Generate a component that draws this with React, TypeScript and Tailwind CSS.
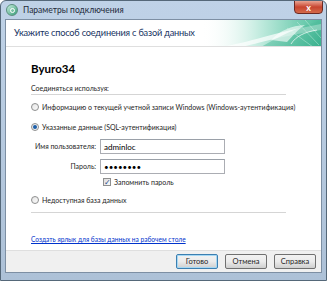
import { useState } from "react";

function Radio({ checked }: { checked?: boolean }) {
    return (
        <span className="w-[8px] h-[8px] rounded-full border border-[#8e8f8f] bg-gradient-to-br from-[#e6e6e6] to-[#fafafa] flex items-center justify-center shrink-0">
            {checked ? <span className="w-[4px] h-[4px] rounded-full bg-[#1c5ea8]"></span> : null}
        </span>
    );
}

function Field({ label, value }: { label: string; value: string }) {
    return (
        <div className="flex items-center h-[15px]">
            <span className="w-[69px] text-right pr-[4px] text-[7px] text-[#1e1e1e]">{label}</span>
            <div className="w-[125px] h-[15px] border border-[#abadb3] border-t-[#9aa0a8] bg-white flex items-center px-[3px] text-[8px] text-black">
                {value}
            </div>
        </div>
    );
}

function Btn({ text, focused }: { text: string; focused?: boolean }) {
    return (
        <button
            type="button"
            className={`w-[42px] h-[15px] rounded-[2px] border text-[7.5px] text-[#1e1e1e] bg-gradient-to-b from-[#f2f2f2] via-[#ebebeb] to-[#cfcfcf] ${focused ? "border-[#3c7fb1] shadow-[inset_0_0_0_1px_#a6d8f4]" : "border-[#707070]"}`}
        >
            {text}
        </button>
    );
}

function HeaderArt() {
    return (
        <svg width="120" height="27" viewBox="0 0 120 27" className="absolute right-0 top-0">
            <defs>
                <linearGradient id="hg" x1="0" y1="0" x2="1" y2="0">
                    <stop offset="0" stopColor="#ffffff" stopOpacity="0" />
                    <stop offset="0.5" stopColor="#bfeadd" />
                    <stop offset="1" stopColor="#4dbf9c" />
                </linearGradient>
                <linearGradient id="hg2" x1="0" y1="0" x2="1" y2="1">
                    <stop offset="0" stopColor="#7fd6bb" />
                    <stop offset="1" stopColor="#2aa582" />
                </linearGradient>
            </defs>
            <rect x="0" y="0" width="120" height="27" fill="url(#hg)" />
            <path d="M20 27 C 50 22, 75 12, 120 4 L120 10 C 80 16, 55 24, 40 27 Z" fill="#ffffff" opacity="0.7" />
            <path d="M60 27 C 75 18, 95 8, 120 0 L120 27 Z" fill="url(#hg2)" opacity="0.55" />
            <path d="M70 20 C 80 10, 90 6, 104 5 C 96 10, 92 16, 86 22 Z" fill="#ffffff" opacity="0.6" />
            <path d="M90 24 C 95 16, 104 12, 116 10" stroke="#ffffff" strokeWidth="1" fill="none" opacity="0.7" />
            <path d="M96 2 L118 25 M104 0 L120 18 M86 8 L112 27" stroke="#e8fbf4" strokeWidth="0.6" opacity="0.6" />
        </svg>
    );
}

export default function App() {
    const [remember] = useState(true);

    return (
        <div
            className="w-[327px] h-[281px] bg-gradient-to-b from-[#bfd2e7] to-[#adc1d7] border border-[#556879] rounded-t-[6px] flex flex-col overflow-hidden whitespace-nowrap"
            style={{ fontFamily: 'Lato, "Noto Sans", sans-serif' }}
        >
            {/* title bar */}
            <div className="h-[18px] flex items-center relative shrink-0">
                <span className="ml-[5px] w-[12px] h-[12px] rounded-full bg-gradient-to-br from-[#c8efe0] to-[#2b9d78] border border-[#5a8f7d] flex items-center justify-center">
                    <span className="w-[5px] h-[5px] rounded-full border border-white"></span>
                </span>
                <span className="ml-[5px] text-[8.5px] text-[#1e2b3a]">Параметры подключения</span>
                <div className="absolute right-[3px] top-[-1px] w-[29px] h-[14px] rounded-b-[4px] border border-[#6b2a24] bg-gradient-to-b from-[#e8a493] via-[#c7442f] to-[#d36a4a] flex items-center justify-center text-white text-[9px] font-bold leading-none">
                    x
                </div>
            </div>

            {/* client */}
            <div className="mx-[4px] mb-[7px] flex-1 bg-white border border-[#7d8fa3] flex flex-col">
                <div className="h-[27px] relative border-b border-[#dfdfdf] flex items-center pl-[8px] shrink-0 overflow-hidden">
                    <HeaderArt />
                    <span className="relative text-[9.2px] tracking-[-0.2px] text-[#17335f]">Укажите способ соединения с базой данных</span>
                </div>

                <div className="flex-1 pl-[25px] pr-[35px] flex flex-col">
                    <div className="mt-[15px] text-[11.5px] font-bold text-black leading-[14px]">Byuro34</div>
                    <div className="mt-[6px] text-[7px] text-[#1e1e1e] leading-[12px]">Соединяться используя:</div>
                    <div className="h-[2px] border-t border-[#d5d5d5] border-b border-b-white"></div>
                    <div className="mt-[5px] flex items-center gap-[3px] text-[7px] text-[#1e1e1e] h-[12px]">
                        <Radio />
                        <span>Информацию о текущей учетной записи Windows (Windows-аутентификация)</span>
                    </div>
                    <div className="mt-[8px] flex items-center gap-[3px] text-[7px] text-[#1e1e1e] h-[12px]">
                        <Radio checked />
                        <span>Указанные данные (SQL-аутентификация)</span>
                    </div>
                    <div className="mt-[6px] flex flex-col gap-[5px]">
                        <Field label="Имя пользователя:" value="adminloc" />
                        <Field label="Пароль:" value="••••••••" />
                    </div>
                    <div className="mt-[2px] ml-[72px] flex items-center gap-[3px] h-[12px] text-[7px] text-[#1e1e1e]">
                        <span className="w-[8px] h-[8px] border border-[#8e8f8f] bg-gradient-to-br from-[#dcdcdc] to-[#fafafa] flex items-center justify-center text-[8px] leading-none text-[#2b4c8a]">
                            {remember ? "✓" : ""}
                        </span>
                        <span>Запомнить пароль</span>
                    </div>
                    <div className="mt-[6px] flex items-center gap-[3px] text-[7px] text-[#1e1e1e] h-[12px]">
                        <Radio />
                        <span>Недоступная база данных</span>
                    </div>
                    <div className="mt-[6px] h-[2px] border-t border-[#d5d5d5] border-b border-b-white"></div>
                    <div className="mt-[19px] text-[6.6px] text-[#0033cc] underline leading-[12px]">
                        Создать ярлык для базы данных на рабочем столе
                    </div>
                </div>

                <div className="h-[22px] bg-[#f0f0f0] border-t border-[#dfdfdf] flex items-center justify-end gap-[7px] pr-[5px] shrink-0">
                    <Btn text="Готово" focused />
                    <Btn text="Отмена" />
                    <Btn text="Справка" />
                </div>
            </div>
        </div>
    );
}
